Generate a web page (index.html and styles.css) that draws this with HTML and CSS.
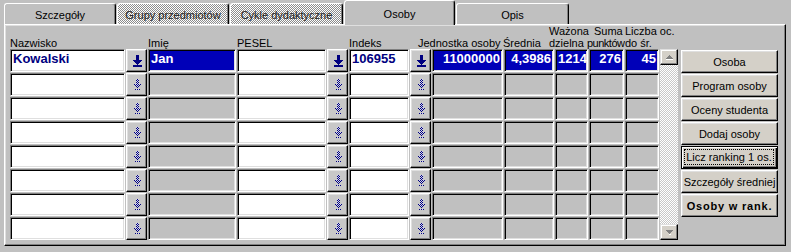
FILE: index.html
```html
<!DOCTYPE html>
<html lang="pl">
<head>
    <meta charset="UTF-8">
    <title>Osoby</title>
    <link rel="stylesheet" href="styles.css">
</head>
<body>

    <div class="window">
        <div class="tabs">
            <div class="tab" style="width:112px">Szczegóły</div>
            <div class="tab tab-off" style="width:112px">Grupy przedmiotów</div>
            <div class="tab tab-off" style="width:113px">Cykle dydaktyczne</div>
            <div class="tab tab-on" style="width:111px">Osoby</div>
            <div class="tab" style="width:113px">Opis</div>
        </div>

        <div class="panel">
            <div class="heads">
                <div class="head h-naz">Nazwisko</div>
                <div class="head h-imie">Imię</div>
                <div class="head h-pesel">PESEL</div>
                <div class="head h-ind">Indeks</div>
                <div class="head h-jed">Jednostka osoby</div>
                <div class="head h-sr">Średnia</div>
                <div class="head h-waz">Ważona<br>dzielna</div>
                <div class="head h-suma"><span class="indent">Suma</span><br><span class="tight">punktów</span></div>
                <div class="head h-licz">Liczba oc.<br>do śr.</div>
            </div>

            <div class="body">
                <div class="grid" id="grid"></div>

                <div class="scroll">
                    <div class="sbtn"><svg width="7" height="5"><use href="#tri-up"/></svg></div>
                    <div class="sbtn"><svg width="7" height="5"><use href="#tri-down"/></svg></div>
                </div>

                <div class="cmds">
                    <div class="cmd">Osoba</div>
                    <div class="cmd">Program osoby</div>
                    <div class="cmd">Oceny studenta</div>
                    <div class="cmd">Dodaj osoby</div>
                    <div class="cmd cmd-def"><span class="focus">Licz ranking 1 os.</span></div>
                    <div class="cmd">Szczegóły średniej</div>
                    <div class="cmd cmd-bold">Osoby w rank.</div>
                </div>
            </div>
        </div>
    </div>

    <svg class="defs" width="0" height="0">
        <defs>
            <pattern id="dith" width="2" height="2" patternUnits="userSpaceOnUse">
                <rect width="2" height="2" fill="#d8d8e8"/>
                <rect width="1" height="1" fill="#000080"/>
                <rect x="1" y="1" width="1" height="1" fill="#000080"/>
            </pattern>
            <symbol id="arr-on" viewBox="0 0 9 12">
                <rect x="3" y="0" width="3" height="5" fill="#000080"/>
                <rect x="0" y="5" width="9" height="1" fill="#000080"/>
                <rect x="1" y="6" width="7" height="1" fill="#000080"/>
                <rect x="2" y="7" width="5" height="1" fill="#000080"/>
                <rect x="3" y="8" width="3" height="1" fill="#000080"/>
                <rect x="4" y="9" width="1" height="1" fill="#000080"/>
                <rect x="0" y="10" width="9" height="2" fill="#000080"/>
            </symbol>
            <symbol id="arr-off" viewBox="0 0 9 12">
                <rect x="3" y="0" width="3" height="5" fill="url(#dith)"/>
                <rect x="1" y="5" width="7" height="1" fill="url(#dith)"/>
                <rect x="2" y="6" width="5" height="1" fill="url(#dith)"/>
                <rect x="3" y="7" width="3" height="1" fill="url(#dith)"/>
                <rect x="4" y="8" width="1" height="1" fill="url(#dith)"/>
                <rect x="2" y="10" width="5" height="1" fill="url(#dith)"/>
            </symbol>
            <symbol id="tri-up" viewBox="0 0 7 5">
                <path d="M3 0h1v1h1v1h1v1h1v1H0V3h1V2h1V1h1z" fill="#808080"/>
                <rect x="0" y="4" width="7" height="1" fill="#fff"/>
            </symbol>
            <symbol id="tri-down" viewBox="0 0 7 5">
                <path d="M0 0h7v1H6v1H5v1H4v1H3V3H2V2H1V1H0z" fill="#808080"/>
                <rect x="3" y="4" width="2" height="1" fill="#fff"/>
            </symbol>
        </defs>
    </svg>

    <script>
        // kolumny: [szerokosc, typ]
        const COLS = [
            [115, 'w'], [21, 'btn'], [88, 'g'], [89, 'w'], [21, 'btn'],
            [60, 'w'], [21, 'btn'], [71, 'g'], [50, 'g'], [33, 'g'], [35, 'g'], [34, 'g']
        ];
        const FIRST = ['Kowalski', null, 'Jan', '', null, '106955', null,
                       '11000000', '4,3986', '1214', '276', '45'];
        const ROWS = 8;

        const grid = document.getElementById('grid');
        for (let r = 0; r < ROWS; r++) {
            const row = document.createElement('div');
            row.className = 'row';
            COLS.forEach(([w, type], i) => {
                const cell = document.createElement('div');
                cell.style.width = w + 'px';
                if (type === 'btn') {
                    cell.className = 'ab';
                    cell.innerHTML = '<svg width="9" height="12"><use href="#' + (r === 0 ? 'arr-on' : 'arr-off') + '"/></svg>';
                } else {
                    let cls = 'f ' + type;
                    if (r === 0 && type === 'g') cls = 'f b';
                    if (i >= 7) cls += ' num';
                    cell.className = cls;
                    if (r === 0) cell.textContent = FIRST[i];
                }
                row.appendChild(cell);
            });
            grid.appendChild(row);
        }
    </script>

</body>
</html>
```

FILE: styles.css
```css
body {
    margin: 0;
    background-color: #c0c0c0;
    font-family: "Liberation Sans", Arial, sans-serif;
    font-size: 11px;
    color: #000;
}
.window {
    width: 791px;
    height: 252px;
    padding-left: 4px;
    box-sizing: border-box;
}

/* zakladki */
.tabs {
    display: flex;
    gap: 1px;
    height: 24px;
    align-items: flex-end;
}
.tab {
    box-sizing: border-box;
    height: 21px;
    padding-top: 2px;
    line-height: 18px;
    text-align: center;
    background-color: #c0c0c0;
    border-top: 1px solid #fff;
    border-left: 1px solid #fff;
    border-right: 1px solid #000;
    border-radius: 3px 3px 0 0;
    box-shadow: inset -1px 0 0 #808080;
}
.tab-off {
    color: #202020;
    background: repeating-conic-gradient(#ffffff 0 25%, #8c8c8c 0 50%) 0 0 / 2px 2px;
}
.tab-on {
    position: relative;
    z-index: 1;
    height: 25px;
    margin-bottom: -1px;
    padding-top: 4px;
}

/* panel */
.panel {
    box-sizing: border-box;
    width: 782px;
    height: 222px;
    padding-left: 5px;
    border-top: 1px solid #fff;
    border-left: 1px solid #fff;
    border-right: 1px solid #000;
    border-bottom: 1px solid #000;
    box-shadow: inset -1px -1px 0 #808080, inset 1px 1px 0 #dfdfdf;
}
.heads {
    display: flex;
    align-items: flex-end;
    height: 24px;
    line-height: 12px;
    white-space: nowrap;
}
.h-naz { width: 138px; }
.h-imie { width: 89px; }
.h-pesel { width: 112px; }
.h-ind { width: 69px; }
.h-jed { width: 85px; }
.h-sr { width: 46px; }
.h-waz { width: 38px; }
.h-suma { width: 38px; }
.indent { padding-left: 7px; }
.tight { letter-spacing: -0.5px; }

.body {
    display: flex;
}
.grid {
    display: flex;
    flex-direction: column;
    gap: 1px;
}
.row {
    display: flex;
    gap: 1px;
    height: 23px;
}
.f {
    box-sizing: border-box;
    height: 23px;
    padding: 0 2px;
    line-height: 17px;
    font-size: 13px;
    font-weight: bold;
    white-space: nowrap;
    overflow: hidden;
    border-top: 1px solid #808080;
    border-left: 1px solid #808080;
    border-right: 1px solid #fff;
    border-bottom: 1px solid #fff;
    box-shadow: inset 1px 1px 0 #000, inset -1px -1px 0 #dfdfdf;
}
.f.w {
    background-color: #fff;
    color: #000080;
}
.f.g {
    background-color: #c0c0c0;
}
.f.b {
    background-color: #0000b8;
    color: #fff;
}
.f.num {
    text-align: right;
}
.ab {
    box-sizing: border-box;
    height: 23px;
    display: flex;
    align-items: center;
    justify-content: center;
    background-color: #c8c8c8;
    border-top: 1px solid #fff;
    border-left: 1px solid #fff;
    border-right: 1px solid #000;
    border-bottom: 1px solid #000;
    box-shadow: inset -1px -1px 0 #808080, inset 1px 1px 0 #dfdfdf;
}
.ab svg {
    display: block;
    margin-left: 1px;
}

/* pasek przewijania */
.scroll {
    box-sizing: border-box;
    width: 18px;
    height: 191px;
    margin-left: 1px;
    display: flex;
    flex-direction: column;
    justify-content: space-between;
    background: repeating-conic-gradient(#ffffff 0 25%, #c8c8c8 0 50%) 0 0 / 2px 2px;
}
.sbtn {
    box-sizing: border-box;
    height: 16px;
    display: flex;
    align-items: center;
    justify-content: center;
    background-color: #d4d0c8;
    border-top: 1px solid #dfdfdf;
    border-left: 1px solid #dfdfdf;
    border-right: 1px solid #000;
    border-bottom: 1px solid #000;
    box-shadow: inset -1px -1px 0 #808080, inset 1px 1px 0 #fff;
}
.sbtn svg {
    display: block;
}

/* przyciski */
.cmds {
    display: flex;
    flex-direction: column;
    gap: 1px;
    width: 97px;
    margin-left: 3px;
    margin-top: 1px;
}
.cmd {
    box-sizing: border-box;
    height: 23px;
    display: flex;
    align-items: center;
    justify-content: center;
    white-space: nowrap;
    background-color: #d4d0c8;
    border-top: 1px solid #fff;
    border-left: 1px solid #fff;
    border-right: 1px solid #000;
    border-bottom: 1px solid #000;
    box-shadow: inset -1px -1px 0 #808080, inset 1px 1px 0 #dfdfdf;
}
.cmd-def {
    border: 1px solid #000;
    box-shadow: inset 1px 1px 0 #fff, inset -1px -1px 0 #000, inset -2px -2px 0 #808080;
    padding: 2px 3px 3px 2px;
}
.focus {
    box-sizing: border-box;
    flex: 1;
    align-self: stretch;
    display: flex;
    align-items: center;
    justify-content: center;
    border: 1px dotted #000;
}
.cmd-bold {
    font-weight: bold;
    letter-spacing: 0.8px;
}

.defs {
    display: block;
    width: 0;
    height: 0;
}
```
